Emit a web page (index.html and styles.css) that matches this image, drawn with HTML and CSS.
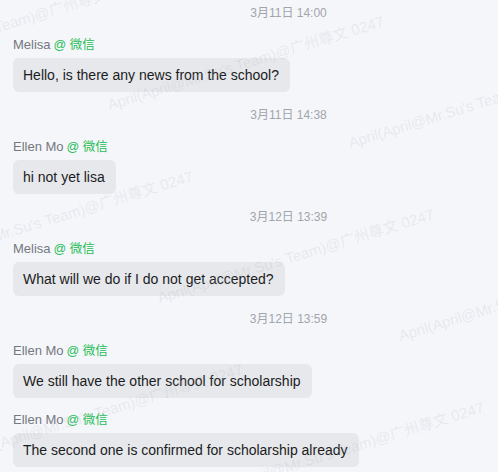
FILE: index.html
```html
<!DOCTYPE html>
<html lang="zh-CN">
<head>
<meta charset="utf-8">
<title>Chat</title>
<link rel="stylesheet" href="styles.css">
</head>
<body>
<div class="chat">
  <div class="time">3月11日 14:00</div>
  <div class="msg">
    <div class="name">Melisa<span class="src">@ 微信</span></div>
    <div class="bubble">Hello, is there any news from the school?</div>
  </div>
  <div class="time">3月11日 14:38</div>
  <div class="msg">
    <div class="name">Ellen Mo<span class="src">@ 微信</span></div>
    <div class="bubble">hi not yet lisa</div>
  </div>
  <div class="time">3月12日 13:39</div>
  <div class="msg">
    <div class="name">Melisa<span class="src">@ 微信</span></div>
    <div class="bubble">What will we do if I do not get accepted?</div>
  </div>
  <div class="time">3月12日 13:59</div>
  <div class="msg">
    <div class="name">Ellen Mo<span class="src">@ 微信</span></div>
    <div class="bubble">We still have the other school for scholarship</div>
  </div>
  <div class="msg">
    <div class="name">Ellen Mo<span class="src">@ 微信</span></div>
    <div class="bubble">The second one is confirmed for scholarship already</div>
  </div>
</div>
<div class="watermarks" aria-hidden="true">
  <span class="wm" style="left:-131px;top:74px">April(April@Mr.Su's Team)@广州尊文 0247</span>
  <span class="wm" style="left:110px;top:112px">April(April@Mr.Su's Team)@广州尊文 0247</span>
  <span class="wm" style="left:351px;top:150px">April(April@Mr.Su's Team)@广州尊文 0247</span>
  <span class="wm" style="left:-81px;top:267px">April(April@Mr.Su's Team)@广州尊文 0247</span>
  <span class="wm" style="left:160px;top:305px">April(April@Mr.Su's Team)@广州尊文 0247</span>
  <span class="wm" style="left:401px;top:343px">April(April@Mr.Su's Team)@广州尊文 0247</span>
  <span class="wm" style="left:-272px;top:422px">April(April@Mr.Su's Team)@广州尊文 0247</span>
  <span class="wm" style="left:-31px;top:460px">April(April@Mr.Su's Team)@广州尊文 0247</span>
  <span class="wm" style="left:210px;top:498px">April(April@Mr.Su's Team)@广州尊文 0247</span>
</div>
</body>
</html>
```

FILE: styles.css
```css
html, body {
  margin: 0;
  padding: 0;
  background: #f5f6fa;
  overflow: hidden;
}
body {
  font-family: "Liberation Sans", "Noto Sans CJK SC", sans-serif;
  width: 498px;
  height: 472px;
  position: relative;
}
.chat {
  width: 577px;
  padding: 3px 0 0 13px;
  box-sizing: border-box;
}
.time {
  text-align: center;
  font-size: 12px;
  line-height: 20px;
  color: #a1a5ac;
  margin-left: -13px;
}
.msg + .time {
  margin-top: 13px;
}
.msg {
  padding-top: 13px;
  display: flex;
  flex-direction: column;
  align-items: flex-start;
  gap: 4px;
}
.name {
  font-size: 13px;
  line-height: 18px;
  color: #74787f;
}
.src {
  color: #1fbd55;
  font-size: 12.5px;
  margin-left: 3px;
}
.bubble {
  background: #e6e8eb;
  border-radius: 6px;
  padding: 7px 11px 7px 10px;
  font-size: 14px;
  line-height: 20px;
  color: #1c1c1e;
}
.watermarks {
  position: absolute;
  inset: 0;
  pointer-events: none;
  overflow: hidden;
}
.wm {
  position: absolute;
  white-space: nowrap;
  font-size: 15px;
  line-height: 15px;
  color: rgba(170, 176, 188, 0.2);
  transform: translateY(-15px) rotate(-17deg);
  transform-origin: 0 100%;
}
```
